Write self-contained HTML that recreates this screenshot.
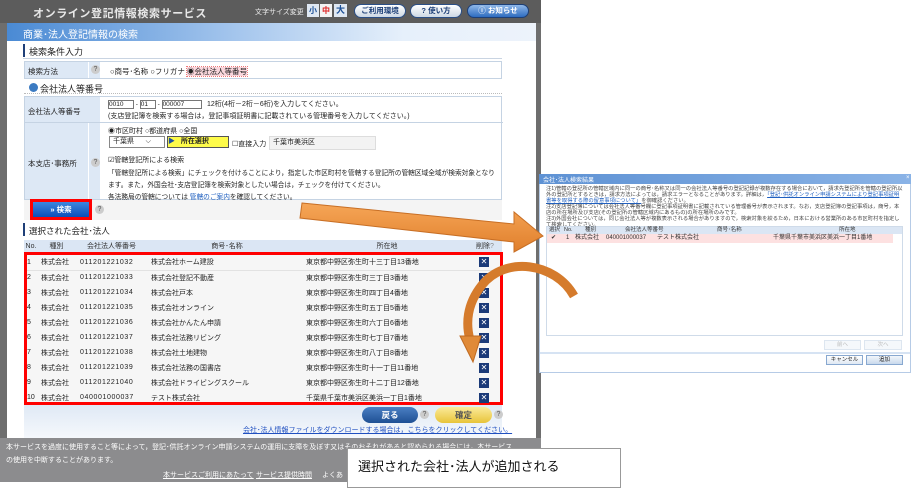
<!DOCTYPE html>
<html><head><meta charset="utf-8"><style>
*{margin:0;padding:0;box-sizing:border-box}
body{width:911px;height:482px;position:relative;overflow:hidden;background:#fff;font-family:"Liberation Sans","Noto Sans CJK JP",sans-serif;font-size:7.5px;color:#222}
.a{position:absolute}
.t{white-space:nowrap}
table{border-collapse:collapse}
.q{width:9px;height:9px;border-radius:50%;background:#ccc;color:#555;font-size:7px;text-align:center;line-height:9px}
.x{display:inline-block;width:10px;height:10px;background:#1b3a78;color:#fff;font-size:8px;line-height:10px}
</style></head><body>
<div class="a" style="left:0;top:0;width:541px;height:482px;background:#6e6e6e"></div>
<div class="a" style="left:0;top:0;width:541px;height:23px;background:#5c5c5c"></div>
<div class="a t" style="left:33px;top:5px;color:#e8e8e8;font-size:11px;font-weight:bold;letter-spacing:0.6px">オンライン登記情報検索サービス</div>
<div class="a t" style="left:255px;top:7px;color:#eee;font-size:7px">文字サイズ変更</div>
<div class="a" style="left:307px;top:4px;width:12px;height:13px;background:#dfe8f3;color:#1b4f96;font-size:8px;text-align:center;line-height:13px;font-weight:bold">小</div>
<div class="a" style="left:320px;top:4px;width:12px;height:13px;background:#f2f2f2;color:#d22;font-size:8px;text-align:center;line-height:13px;font-weight:bold">中</div>
<div class="a" style="left:334px;top:4px;width:13px;height:13px;background:#dfe8f3;color:#1b4f96;font-size:9px;text-align:center;line-height:13px;font-weight:bold">大</div>
<div class="a" style="left:354px;top:4px;width:52px;height:14px;border-radius:7px;background:linear-gradient(#fff,#cdd8e4);border:1px solid #2b4f86;color:#1b3e77;font-size:7.5px;text-align:center;line-height:12px;font-weight:bold">ご利用環境</div>
<div class="a" style="left:410px;top:4px;width:52px;height:14px;border-radius:7px;background:linear-gradient(#fff,#cdd8e4);border:1px solid #2b4f86;color:#1b3e77;font-size:7.5px;text-align:center;line-height:12px;font-weight:bold">? 使い方</div>
<div class="a" style="left:467px;top:4px;width:62px;height:14px;border-radius:7px;background:linear-gradient(#8fb7e8,#2e6cc0);border:1px solid #1d3f76;color:#fff;font-size:7.5px;text-align:center;line-height:12px;font-weight:bold">ⓘ お知らせ</div>

<div class="a" style="left:7px;top:23px;width:529px;height:415px;background:#fff"></div>
<div class="a" style="left:7px;top:23px;width:529px;height:18px;background:linear-gradient(90deg,#4a8ad4,#a8c8ee 45%,#e6f0fb 75%,#edf3fb)"></div>
<div class="a t" style="left:23px;top:26px;color:#fff;font-size:10px">商業･法人登記情報の検索</div>
<div class="a" style="left:23px;top:44px;width:2px;height:13px;background:#1f3f78"></div>
<div class="a t" style="left:29px;top:45px;font-size:9px;color:#222">検索条件入力</div>
<div class="a" style="left:23px;top:58px;width:479px;height:1px;background:#c9d4e2"></div>

<div class="a" style="left:24px;top:61px;width:478px;height:18px;border:1px solid #c5d3e3"></div>
<div class="a" style="left:25px;top:62px;width:63px;height:16px;background:#dde8f5"></div>
<div class="a" style="left:88px;top:62px;width:12px;height:16px;background:#dde8f5;border-left:1px solid #fff"></div>
<div class="a t" style="left:28px;top:66px">検索方法</div>
<div class="a q" style="left:91px;top:65px">?</div>
<div class="a t" style="left:110px;top:66px">○商号･名称 ○フリガナ <span style="background:#f9d6dc;outline:1px dotted #e77">◉会社法人等番号</span></div>

<div class="a" style="left:29px;top:83px;width:9px;height:9px;border-radius:50%;background:#3c7bc2"></div>
<div class="a t" style="left:40px;top:82px;font-size:9px;color:#222">会社法人等番号</div>
<div class="a" style="left:24px;top:93px;width:478px;border-top:1px dotted #bbb"></div>

<div class="a" style="left:24px;top:96px;width:478px;height:104px;border:1px solid #c5d3e3"></div>
<div class="a" style="left:25px;top:97px;width:75px;height:25px;background:#dde8f5"></div>
<div class="a" style="left:25px;top:122px;width:478px;height:1px;background:#c5d3e3"></div>
<div class="a" style="left:25px;top:123px;width:63px;height:76px;background:#dde8f5"></div>
<div class="a" style="left:88px;top:123px;width:12px;height:76px;background:#dde8f5;border-left:1px solid #fff"></div>
<div class="a t" style="left:28px;top:106px">会社法人等番号</div>
<div class="a t" style="left:28px;top:158px">本支店･事務所</div>
<div class="a q" style="left:91px;top:158px">?</div>
<div class="a t" style="left:108px;top:99px;font-size:6.5px">
<span style="display:inline-block;width:26px;height:9px;border:1px solid #777;vertical-align:middle;line-height:7px">0010</span> - <span style="display:inline-block;width:16px;height:9px;border:1px solid #777;vertical-align:middle;line-height:7px">01</span> - <span style="display:inline-block;width:40px;height:9px;border:1px solid #777;vertical-align:middle;line-height:7px">000007</span> &nbsp; <span style="font-size:7px">12桁(4桁－2桁－6桁)を入力してください。</span></div>
<div class="a t" style="left:108px;top:111px;font-size:7px">(支店登記簿を検索する場合は，登記事項証明書に記載されている管理番号を入力してください。)</div>
<div class="a t" style="left:108px;top:126px;font-size:7px">◉市区町村 ○都道府県 ○全国</div>
<div class="a" style="left:109px;top:136px;width:56px;height:12px;border:1px solid #888;font-size:7px;padding-left:3px;line-height:10px">千葉県 &nbsp; &nbsp; &nbsp;⌵</div>
<div class="a" style="left:167px;top:136px;width:62px;height:12px;background:#fefb4a;border:1px solid #555;font-size:7px;font-weight:bold;line-height:10px"><span style="color:#1e4fa0">▶</span> &nbsp; 所在選択</div>
<div class="a t" style="left:232px;top:139px;font-size:7px">☐直接入力</div>
<div class="a" style="left:269px;top:136px;width:107px;height:14px;background:#f3f3f3;border:1px solid #ddd;padding-left:3px;line-height:12px;font-size:7px">千葉市美浜区</div>
<div class="a t" style="left:108px;top:155px;font-size:7px">☑管轄登記所による検索</div>
<div class="a t" style="left:108px;top:167px;font-size:6.7px">「管轄登記所による検索」にチェックを付けることにより，指定した市区町村を管轄する登記所の管轄区域全域が検索対象となり</div>
<div class="a t" style="left:108px;top:179px;font-size:6.7px">ます。また，外国会社･支店登記簿を検索対象としたい場合は，チェックを付けてください。</div>
<div class="a t" style="left:108px;top:191px;font-size:6.7px">各法務局の管轄については <span style="color:#2060c0;text-decoration:underline">管轄のご案内</span>を確認してください。</div>

<div class="a" style="left:24px;top:200px;width:478px;height:20px;background:#f4f4f4"></div>
<div class="a" style="left:30px;top:199px;width:62px;height:21px;border:3px solid #f00"></div>
<div class="a" style="left:33px;top:202px;width:56px;height:15px;background:linear-gradient(#3d86df,#0c4fb8);color:#fff;font-size:7.5px;font-weight:bold;text-align:center;line-height:15px">» 検索</div>
<div class="a q" style="left:95px;top:205px">?</div>

<div class="a" style="left:23px;top:223px;width:2px;height:13px;background:#1f3f78"></div>
<div class="a t" style="left:29px;top:225px;font-size:8.5px;color:#222">選択された会社･法人</div>

<table class="a" style="left:24px;top:240px;width:478px;font-size:7px">
<tr style="height:12px;background:#dbe6f4;color:#333;text-align:center"><td style="width:14px">No.</td><td style="width:37px">種別</td><td style="width:73px">会社法人等番号</td><td style="width:158px">商号･名称</td><td style="width:162px">所在地</td><td>削除<span style="color:#888">?</span></td></tr>
</table>
<div class="a" style="left:24px;top:252px;width:479px;height:153px;border:3px solid #f00;background:#f6f6f6"></div>
<div class="a" style="left:27px;top:255px;width:473px">
<table style="width:473px;font-size:7px;color:#222">
<tr style="height:15px;border-bottom:1px solid #e2e2e2"><td style="width:11px">1</td><td style="width:37px;padding-left:3px">株式会社</td><td style="width:73px;padding-left:5px;letter-spacing:.6px">011201221032</td><td style="width:158px;padding-left:3px">株式会社ホーム建設</td><td style="width:162px">東京都中野区弥生町十三丁目13番地</td><td style="text-align:center"><span class="x">✕</span></td></tr>
<tr style="height:15px"><td>2</td><td style="padding-left:3px">株式会社</td><td style="padding-left:5px;letter-spacing:.6px">011201221033</td><td style="padding-left:3px">株式会社登記不動産</td><td>東京都中野区弥生町三丁目3番地</td><td style="text-align:center"><span class="x">✕</span></td></tr>
<tr style="height:15px"><td>3</td><td style="padding-left:3px">株式会社</td><td style="padding-left:5px;letter-spacing:.6px">011201221034</td><td style="padding-left:3px">株式会社戸本</td><td>東京都中野区弥生町四丁目4番地</td><td style="text-align:center"><span class="x">✕</span></td></tr>
<tr style="height:15px"><td>4</td><td style="padding-left:3px">株式会社</td><td style="padding-left:5px;letter-spacing:.6px">011201221035</td><td style="padding-left:3px">株式会社オンライン</td><td>東京都中野区弥生町五丁目5番地</td><td style="text-align:center"><span class="x">✕</span></td></tr>
<tr style="height:15px"><td>5</td><td style="padding-left:3px">株式会社</td><td style="padding-left:5px;letter-spacing:.6px">011201221036</td><td style="padding-left:3px">株式会社かんたん申請</td><td>東京都中野区弥生町六丁目6番地</td><td style="text-align:center"><span class="x">✕</span></td></tr>
<tr style="height:15px"><td>6</td><td style="padding-left:3px">株式会社</td><td style="padding-left:5px;letter-spacing:.6px">011201221037</td><td style="padding-left:3px">株式会社法務リビング</td><td>東京都中野区弥生町七丁目7番地</td><td style="text-align:center"><span class="x">✕</span></td></tr>
<tr style="height:15px"><td>7</td><td style="padding-left:3px">株式会社</td><td style="padding-left:5px;letter-spacing:.6px">011201221038</td><td style="padding-left:3px">株式会社土地建物</td><td>東京都中野区弥生町八丁目8番地</td><td style="text-align:center"><span class="x">✕</span></td></tr>
<tr style="height:15px"><td>8</td><td style="padding-left:3px">株式会社</td><td style="padding-left:5px;letter-spacing:.6px">011201221039</td><td style="padding-left:3px">株式会社法務の国書店</td><td>東京都中野区弥生町十一丁目11番地</td><td style="text-align:center"><span class="x">✕</span></td></tr>
<tr style="height:15px"><td>9</td><td style="padding-left:3px">株式会社</td><td style="padding-left:5px;letter-spacing:.6px">011201221040</td><td style="padding-left:3px">株式会社ドライビングスクール</td><td>東京都中野区弥生町十二丁目12番地</td><td style="text-align:center"><span class="x">✕</span></td></tr>
<tr style="height:15px"><td>10</td><td style="padding-left:3px">株式会社</td><td style="padding-left:5px;letter-spacing:.6px">040001000037</td><td style="padding-left:3px">テスト株式会社</td><td>千葉県千葉市美浜区美浜一丁目1番地</td><td style="text-align:center"><span class="x">✕</span></td></tr>
</table></div>
<div class="a" style="left:24px;top:405px;width:478px;height:33px;background:linear-gradient(#dfe9f5,#f5f8fc)"></div>
<div class="a" style="left:362px;top:407px;width:56px;height:16px;border-radius:8px;background:linear-gradient(#4b7fc3,#1e4f93);color:#fff;font-size:8.5px;font-weight:bold;text-align:center;line-height:16px">戻る</div>
<div class="a q" style="left:420px;top:410px">?</div>
<div class="a" style="left:435px;top:407px;width:57px;height:16px;border-radius:8px;background:linear-gradient(#fbea9a,#e8c43a);color:#555;font-size:8.5px;font-weight:bold;text-align:center;line-height:16px">確定</div>
<div class="a q" style="left:494px;top:410px">?</div>
<div class="a t" style="left:243px;top:425px;font-size:7px;color:#2050c0;text-decoration:underline">会社･法人情報ファイルをダウンロードする場合は，こちらをクリックしてください。</div>

<div class="a" style="left:0;top:438px;width:541px;height:44px;background:#8c8c8e"></div>
<div class="a t" style="left:6px;top:442px;font-size:7px;color:#fff">本サービスを過度に使用すること等によって，登記･供託オンライン申請システムの運用に支障を及ぼす又はそのおそれがあると認められる場合には，本サービス</div>
<div class="a t" style="left:6px;top:455px;font-size:7px;color:#fff">の使用を中断することがあります。</div>
<div class="a t" style="left:163px;top:470px;font-size:7px;color:#fff;text-decoration:underline">本サービスご利用にあたって</div>
<div class="a t" style="left:256px;top:470px;font-size:7px;color:#fff;text-decoration:underline">サービス提供時間</div>
<div class="a t" style="left:322px;top:470px;font-size:7px;color:#fff">よくあ</div>

<!-- dialog -->
<div class="a" style="left:539px;top:174px;width:372px;height:199px;background:#fff;border:1px solid #b6cbe6"></div>
<div class="a" style="left:539px;top:174px;width:372px;height:10px;background:linear-gradient(90deg,#5e92d4,#8ab3e6)"></div>
<div class="a t" style="left:543px;top:175px;font-size:6px;color:#fff">会社･法人検索結果</div>
<div class="a t" style="left:906px;top:175px;font-size:6px;color:#fff">×</div>
<div class="a" style="left:546px;top:186px;width:358px;font-size:5.3px;line-height:6px;color:#444">注1)管轄の登記所の管轄区域内に同一の商号･名称又は同一の会社法人等番号の登記記録が複数存在する場合において，請求先登記所を管轄の登記所以外の登記所とするときは，請求方法によっては，請求エラーとなることがあります。詳細は，<span style="color:#2060c0;text-decoration:underline">「登記･供託オンライン申請システムにより登記事項証明書等を取得する際の留意事項について」</span>を御確認ください。<br>注2)支店登記簿については会社法人等番号欄に登記事項証明書に記載されている管理番号が表示されます。なお，支店登記簿の登記事項は，商号，本店の所在場所及び支店(その登記所の管轄区域内にあるもの)の所在場所のみです。<br>注3)外国会社については，同じ会社法人等が複数表示される場合がありますので，検索対象を絞るため，日本における営業所のある市区町村を指定して検索してください。</div>
<div class="a" style="left:546px;top:226px;width:357px;height:110px;border:1px solid #cfdbe9"></div>
<div class="a" style="left:547px;top:227px;width:355px;height:7px;background:#dbe6f4;font-size:5.5px;line-height:7px;color:#333">
<span class="a" style="left:2px">選択</span><span class="a" style="left:17px">No.</span><span class="a" style="left:38px">種別</span><span class="a" style="left:78px">会社法人等番号</span><span class="a" style="left:170px">商号･名称</span><span class="a" style="left:292px">所在地</span></div>
<div class="a" style="left:547px;top:234px;width:346px;height:9px;background:#fde1e1;font-size:6px;line-height:9px;color:#333">
<span class="a" style="left:4px">✔</span><span class="a" style="left:19px">1</span><span class="a" style="left:28px">株式会社</span><span class="a" style="left:59px">040001000037</span><span class="a" style="left:110px">テスト株式会社</span><span class="a" style="left:226px">千葉県千葉市美浜区美浜一丁目1番地</span></div>
<div class="a" style="left:824px;top:340px;width:37px;height:10px;border:1px solid #dde6f0;background:#f5f8fb;font-size:5.5px;color:#bbb;text-align:center;line-height:9px">前へ</div>
<div class="a" style="left:864px;top:340px;width:38px;height:10px;border:1px solid #dde6f0;background:#f5f8fb;font-size:5.5px;color:#bbb;text-align:center;line-height:9px">次へ</div>
<div class="a" style="left:540px;top:352px;width:370px;height:2px;background:#d6e3f3"></div>
<div class="a" style="left:826px;top:355px;width:37px;height:10px;border:1px solid #88a8d0;background:linear-gradient(#fff,#dfe8f3);font-size:5.5px;text-align:center;line-height:9px">キャンセル</div>
<div class="a" style="left:866px;top:355px;width:37px;height:10px;border:1px solid #88a8d0;background:linear-gradient(#f2f6fb,#c9d9ec);font-size:5.5px;text-align:center;line-height:9px">追加</div>

<svg class="a" style="left:0;top:0" width="911" height="482">
<defs><linearGradient id="g" x1="0" y1="0" x2="0" y2="1"><stop offset="0" stop-color="#f6a657"/><stop offset="1" stop-color="#e07f2c"/></linearGradient></defs>
<polygon points="302,203 514,224 514,212 543,236 514,252 514,242 300,218" fill="url(#g)" stroke="#c86f25" stroke-width="1"/>
<path d="M574,296 C555,262 505,256 482,285 C466,305 466,325 470,340" fill="none" stroke="#d57b2c" stroke-width="9"/>
<polygon points="460,336 481,336 473,362" fill="#e08a38" stroke="#c06a20" stroke-width="1"/>
</svg>

<div class="a" style="left:347px;top:448px;width:274px;height:40px;background:#fff;border:1px solid #999"></div>
<div class="a t" style="left:358px;top:456px;font-size:13px;color:#111">選択された会社･法人が追加される</div>
</body></html>
